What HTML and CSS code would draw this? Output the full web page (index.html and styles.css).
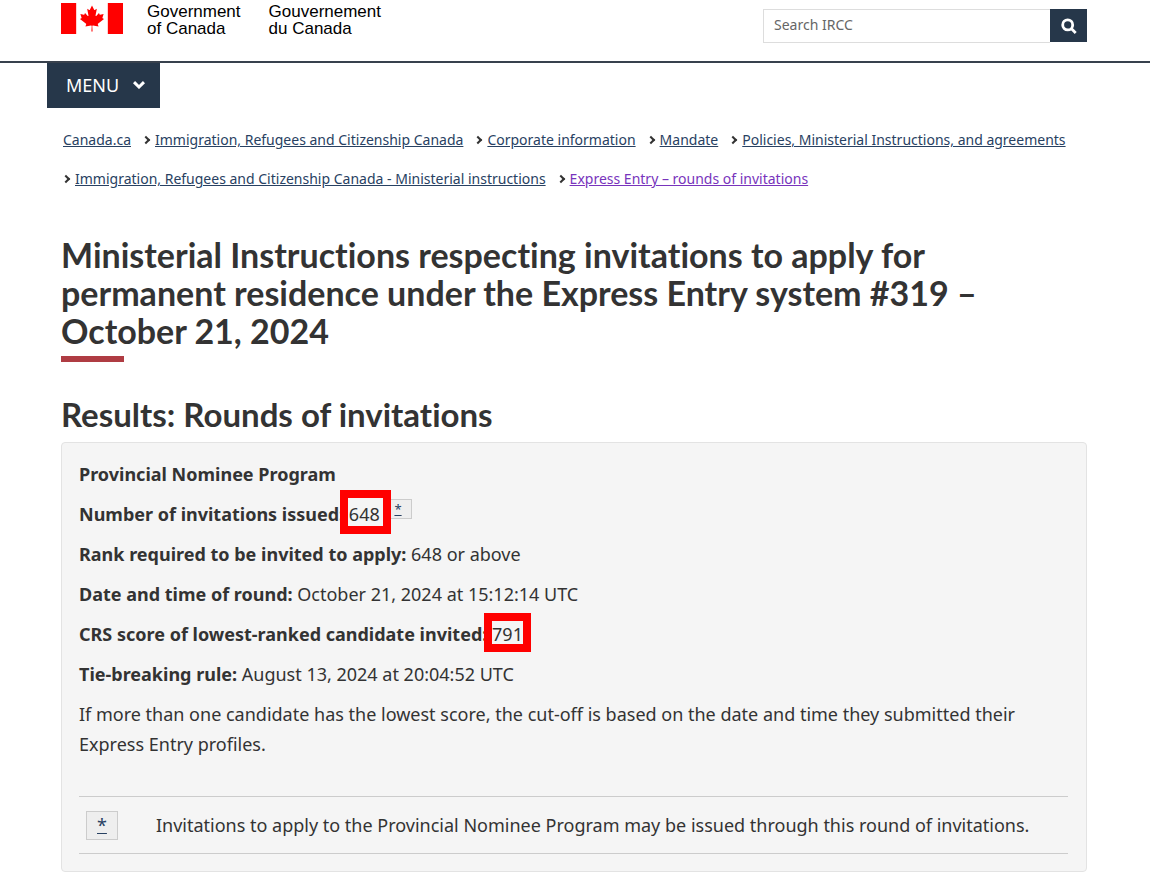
FILE: index.html
```html
<!DOCTYPE html>
<html lang="en">
<head>
	<meta charset="utf-8" />
	<title>Ministerial Instructions - Express Entry rounds of invitations</title>
	<link rel="stylesheet" href="styles.css">
</head>
<body>
	<header>
		<div class="container brand-row">
			<a class="brand" href="#">
				<svg class="flag" viewBox="0 0 9600 4800" aria-hidden="true">
					<path d="M0 0h2350v4800H0zM7250 0h2350v4800H7250z"/>
					<path d="m4890 4430-45-863a95 95 0 0 1 111-98l859 151-116-320a65 65 0 0 1 20-73l941-762-212-99a65 65 0 0 1-34-79l186-572-542 115a65 65 0 0 1-73-38l-105-247-423 454a65 65 0 0 1-111-57l204-1052-327 189a65 65 0 0 1-91-27l-332-652-332 652a65 65 0 0 1-91 27l-327-189 204 1052a65 65 0 0 1-111 57l-423-454-105 247a65 65 0 0 1-73 38l-542-115 186 572a65 65 0 0 1-34 79l-212 99 941 762a65 65 0 0 1 20 73l-116 320 859-151a95 95 0 0 1 111 98l-45 863z"/>
				</svg>
				<span>Government<br/>of Canada</span>
				<span lang="fr">Gouvernement<br/>du Canada</span>
			</a>
			<form class="search">
				<input type="search" placeholder="Search IRCC" aria-label="Search IRCC">
				<button type="button" aria-label="Search">
					<svg viewBox="0 0 16 16" width="16" height="16" aria-hidden="true">
						<circle cx="6.7" cy="6.9" r="5"/>
						<path d="M10.3 10.5l4.4 4.4"/>
					</svg>
				</button>
			</form>
		</div>
		<nav class="menu-bar">
			<button class="menu" type="button">MENU
				<svg viewBox="0 0 12 8" width="12" height="8" aria-hidden="true"><path d="M1 1.2l5 4.8 5-4.8"/></svg>
			</button>
		</nav>
	</header>

	<nav class="container" aria-label="Breadcrumbs">
		<ol class="breadcrumb">
			<li><a href="#">Canada.ca</a></li>
			<li><a href="#">Immigration, Refugees and Citizenship Canada</a></li>
			<li><a href="#">Corporate information</a></li>
			<li><a href="#">Mandate</a></li>
			<li><a href="#">Policies, Ministerial Instructions, and agreements</a></li>
			<li><a href="#">Immigration, Refugees and Citizenship Canada - Ministerial instructions</a></li>
			<li><a class="seen" href="#">Express Entry – rounds of invitations</a></li>
		</ol>
	</nav>

	<main class="container">
		<h1>Ministerial Instructions respecting invitations to apply for permanent residence under the Express Entry system #319 – October 21, 2024</h1>
		<h2>Results: Rounds of invitations</h2>
		<section class="well">
			<p><strong>Provincial Nominee Program</strong></p>
			<p><strong>Number of invitations issued:</strong> <span class="marked issued">648</span> <sup><a class="note-link" href="#fn">*</a></sup></p>
			<p><strong>Rank required to be invited to apply:</strong> 648 or above</p>
			<p><strong>Date and time of round:</strong> October 21, 2024 at 15:12:14 UTC</p>
			<p><strong>CRS score of lowest-ranked candidate invited:</strong> <span class="marked score">791</span></p>
			<p><strong>Tie-breaking rule:</strong> August 13, 2024 at 20:04:52 UTC</p>
			<p>If more than one candidate has the lowest score, the cut-off is based on the date and time they submitted their Express Entry profiles.</p>
			<aside class="footnote" id="fn">
				<a class="note-return" href="#">*</a>
				<span>Invitations to apply to the Provincial Nominee Program may be issued through this round of invitations.</span>
			</aside>
		</section>
	</main>
</body>
</html>
```
FILE: styles.css
```css
*
{
	box-sizing: border-box;
}

body
{
	margin: 0;
	font-family: "Noto Sans", sans-serif;
	font-size: 18px;
	line-height: 30px;
	color: #333;
	background-color: white;
}

a
{
	color: #284162;
}

.container
{
	padding: 0 63px 0 61px;
}

/* header */
.brand-row
{
	display: flex;
	justify-content: space-between;
	align-items: flex-start;
	height: 61px;
}

.brand
{
	display: flex;
	gap: 24px;
	padding-top: 3px;
	font-family: "Liberation Sans", Arial, sans-serif;
	font-size: 17px;
	line-height: 17px;
	color: black;
	text-decoration: none;
}

.brand span + span
{
	margin-left: 4px;
}

.flag
{
	width: 62px;
	height: 31px;
	fill: red;
}

.search
{
	display: flex;
	width: 324px;
	height: 34px;
	margin-top: 9px;
}

.search input
{
	flex: 1;
	min-width: 0;
	padding: 0 10px 3px;
	border: 1px solid #ddd;
	border-right: none;
	border-radius: 0;
	font-family: inherit;
	font-size: 14px;
	color: #555;
	-webkit-appearance: none;
	appearance: none;
}

.search input::placeholder
{
	color: #666;
}

.search button
{
	display: flex;
	align-items: center;
	justify-content: center;
	width: 37px;
	height: 33px;
	padding: 0;
	border: none;
	background-color: #26374a;
}

.search svg
{
	fill: none;
	stroke: white;
	stroke-width: 2.8;
}

.menu-bar
{
	padding-left: 47px;
	border-top: 2px solid #38414d;
}

.menu
{
	display: flex;
	align-items: center;
	gap: 14px;
	height: 45px;
	padding: 0 15px 2px 19px;
	border: none;
	background-color: #26374a;
	color: white;
	font-family: inherit;
	font-size: 18px;
}

.menu svg
{
	fill: none;
	stroke: white;
	stroke-width: 3;
}

/* breadcrumbs */
.breadcrumb
{
	display: flex;
	flex-wrap: wrap;
	column-gap: 12px;
	margin: 12px 0 0;
	padding: 0 0 0 2px;
	list-style: none;
	font-size: 14px;
	line-height: 39px;
}

.breadcrumb li + li::before
{
	content: "";
	display: inline-block;
	width: 4px;
	height: 4px;
	margin: 0 6px 2px 0;
	border: solid #333;
	border-width: 2px 2px 0 0;
	box-sizing: content-box;
	transform: rotate(45deg);
}

.breadcrumb .seen
{
	color: #7834bc;
}

/* content */
h1, h2
{
	font-family: Lato, sans-serif;
	font-weight: 700;
	font-variant-ligatures: none;
}

h1
{
	margin: 38px 0 0;
	font-size: 34px;
	line-height: 38px;
}

h1::after
{
	content: "";
	display: block;
	width: 63px;
	height: 6px;
	margin-top: 6px;
	background-color: #af3c43;
}

h2
{
	margin: 33px 0 9px;
	font-size: 33px;
	line-height: 38px;
}

.well
{
	padding: 16px 18px 17px 17px;
	border: 1px solid #e3e3e3;
	border-radius: 4px;
	background-color: #f5f5f5;
}

.well p
{
	margin: 0 0 10px;
}

/* red boxes drawn round the key numbers */
.marked
{
	position: relative;
}

.marked::after
{
	content: "";
	position: absolute;
	border: 8px solid red;
}

.issued::after
{
	inset: -12px -11px -8px -9px;
}

.score::after
{
	inset: -9px -8px -6px -8px;
}

sup
{
	font-size: 13px;
	line-height: 0;
}

.note-link, .note-return
{
	border: 1px solid #ccc;
	background-color: #eee;
}

.note-link
{
	margin-left: 4px;
	padding: 0 9px 0 5px;
}

.footnote
{
	display: flex;
	align-items: center;
	gap: 38px;
	margin-top: 37px;
	padding: 13px 7px;
	border: solid #ccc;
	border-width: 1px 0;
}

.note-return
{
	padding: 0 10px;
	line-height: 27px;
}
```
